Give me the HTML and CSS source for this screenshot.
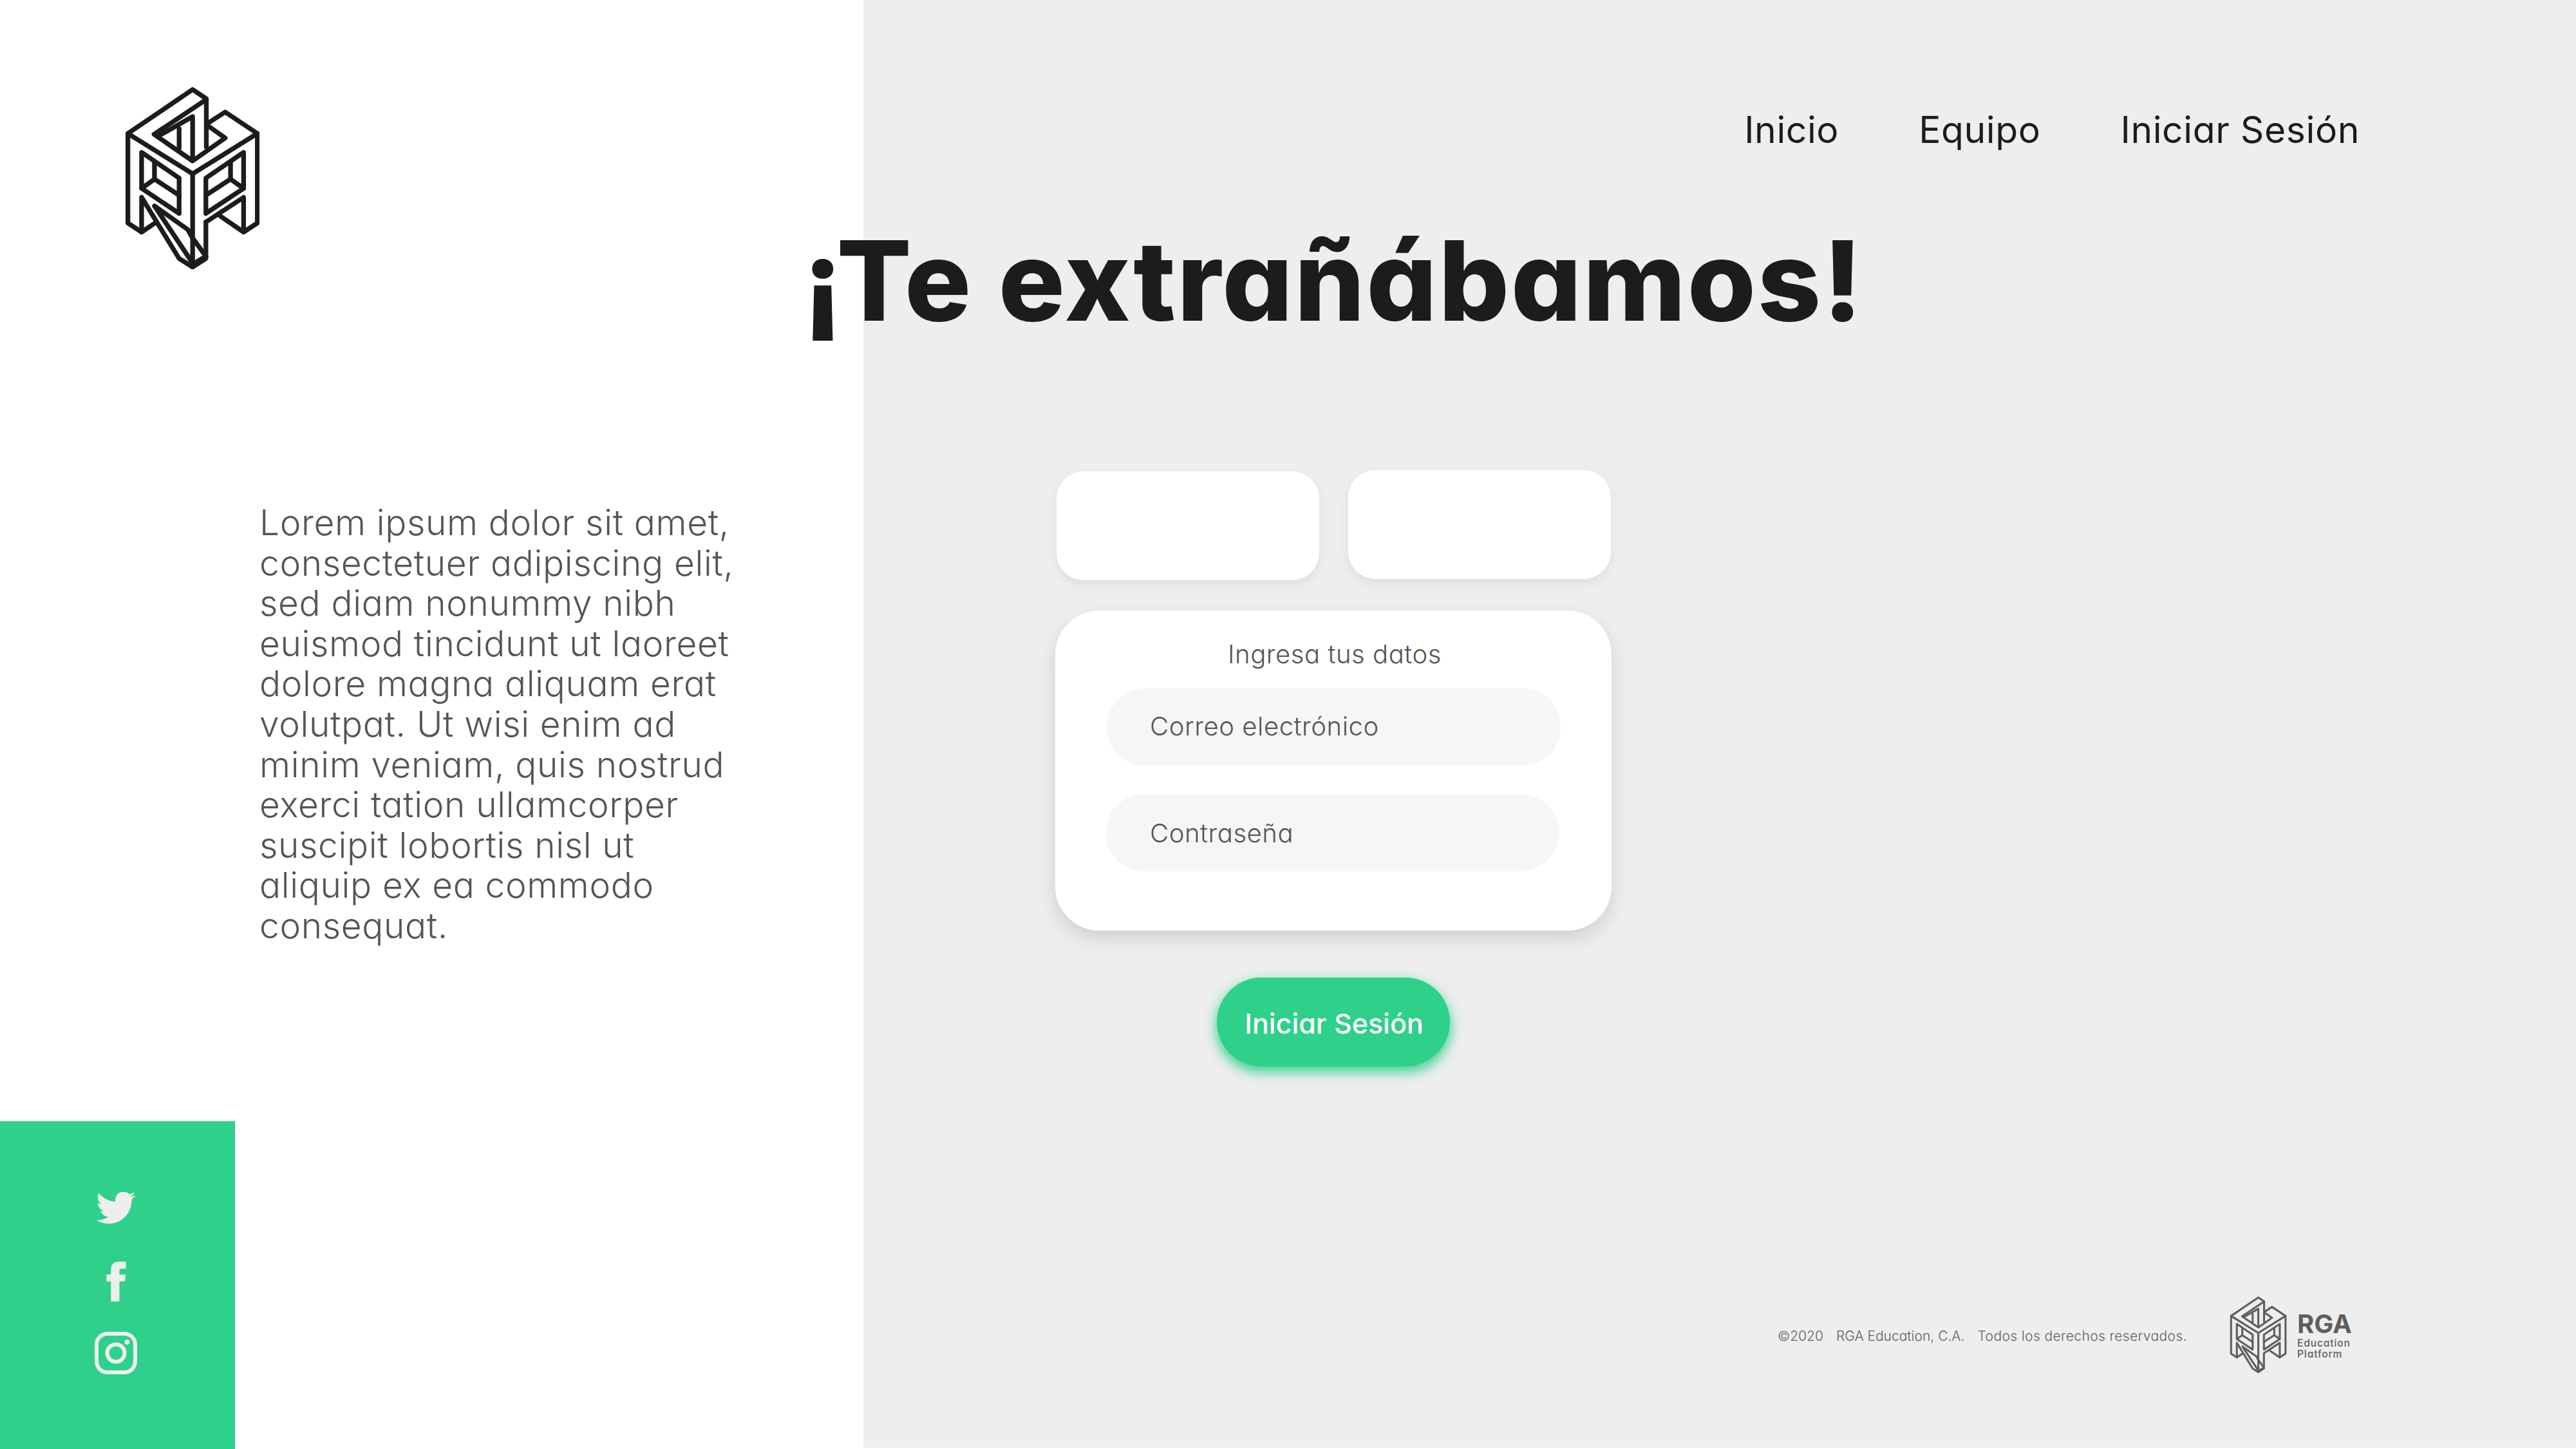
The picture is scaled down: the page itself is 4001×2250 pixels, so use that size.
FILE: index.html
```html
<!DOCTYPE html>
<html lang="es">
<head>
<meta charset="utf-8">
<title>RGA Education</title>
<link rel="stylesheet" href="styles.css">
</head>
<body>
<svg class="defs" width="0" height="0" aria-hidden="true">
  <symbol id="rga" viewBox="135 105 625 850">
    <g fill="none" stroke="currentColor" stroke-width="22" stroke-linejoin="round" stroke-linecap="round">
      <path d="M275 738 L210 782 L146 740 V322 L448 117 L512 160 V385"/>
      <path d="M525 270 L600 222 L750 322 V740 L686 782 L578 708"/>
      <path d="M146 322 L448 510 L750 322"/>
      <path d="M448 510 V945"/>
      <path d="M505 168 L268 326 L448 450 L600 343 L525 290"/>
      <path d="M295 330 L448 243 V445"/>
      <path d="M385 300 V392"/>
      <path d="M210 410 L385 530 V695 L210 578 Z"/>
      <path d="M270 455 V530 M210 578 L270 535 L385 610"/>
      <path d="M686 410 L510 530 V695 L686 578 Z"/>
      <path d="M625 455 V530 M686 578 L625 535 L510 610"/>
      <path d="M510 735 V905 L448 945 L385 905 L210 620 V782"/>
      <path d="M510 735 L686 620 V782"/>
      <path d="M270 660 L425 770 L448 810 M270 660 L440 915"/>
      <path d="M448 810 L510 895 L448 932"/>
    </g>
  </symbol>
</svg>
<main class="page">
  <aside class="side">
    <svg class="logo"><use href="#rga"/></svg>
    <p class="intro">Lorem ipsum dolor sit amet,<br>consectetuer adipiscing elit,<br>sed diam nonummy nibh<br>euismod tincidunt ut laoreet<br>dolore magna aliquam erat<br>volutpat. Ut wisi enim ad<br>minim veniam, quis nostrud<br>exerci tation ullamcorper<br>suscipit lobortis nisl ut<br>aliquip ex ea commodo<br>consequat.</p>
    <div class="social">
      <svg class="ico-tw" viewBox="0 2.500 24 20"><path d="M23.953 4.570a10 10 0 0 1-2.825.775 4.958 4.958 0 0 0 2.163-2.723c-.951.555-2.005.959-3.127 1.184a4.920 4.920 0 0 0-8.384 4.482C7.690 8.095 4.067 6.130 1.640 3.162a4.822 4.822 0 0 0-.666 2.475c0 1.710.870 3.213 2.188 4.096a4.904 4.904 0 0 1-2.228-.616v.060a4.923 4.923 0 0 0 3.946 4.827 4.996 4.996 0 0 1-2.212.085 4.936 4.936 0 0 0 4.604 3.417 9.867 9.867 0 0 1-6.102 2.105c-.390 0-.779-.023-1.170-.067a13.995 13.995 0 0 0 7.557 2.209c9.053 0 13.998-7.496 13.998-13.985 0-.210 0-.420-.015-.630A9.935 9.935 0 0 0 24 4.590z"/></svg>
      <svg class="ico-fb" viewBox="495 707 92 188"><path d="M516 895V800H495V768H516V745C516 720 530 707 555 707H587V740H565C558 740 556 743 556 750V768H585L582 800H556V895Z"/></svg>
      <svg class="ico-ig" viewBox="0 0 66 66"><rect x="3" y="3" width="60" height="60" rx="17" class="ig-line"/><circle cx="33" cy="33" r="13.500" class="ig-line"/><circle cx="50.500" cy="16" r="4"/></svg>
    </div>
  </aside>
  <section class="main">
    <nav class="nav">
      <a>Inicio</a>
      <a>Equipo</a>
      <a>Iniciar Sesión</a>
    </nav>
    <h1 class="title">¡Te extrañábamos!</h1>
    <div class="form">
      <div class="tabs">
        <div class="tab tab-a"></div>
        <div class="tab tab-b"></div>
      </div>
      <div class="card">
        <p class="card-title">Ingresa tus datos</p>
        <div class="field field-a">Correo electrónico</div>
        <div class="field field-b">Contraseña</div>
      </div>
      <button class="submit">Iniciar Sesión</button>
    </div>
    <footer class="foot">
      <span class="legal"><span>©2020</span><span>RGA Education, C.A.</span><span class="legal-rights">Todos los derechos reservados.</span></span>
      <svg class="foot-logo"><use href="#rga"/></svg>
      <div class="brand"><b>RGA</b><span>Education<br>Platform</span></div>
    </footer>
  </section>
</main>
</body>
</html>
```
FILE: styles.css
```css
* { box-sizing: border-box; }
html, body { margin: 0; padding: 0; }
body { font-family: Inter, "Liberation Sans", sans-serif; font-feature-settings: "cv11"; color: #1c1c1c; background: #fff; }
.defs { position: absolute; }
.page { display: flex; width: 4001px; height: 2250px; overflow: hidden; align-items: flex-start; }

.side { width: 1341px; height: 2250px; flex: none; display: flex; flex-direction: column; background: #fff; padding-top: 135px; }
.logo { width: 208px; height: 283px; margin-left: 195px; color: #1c1c1c; flex: none; }
.intro { margin: 362px 0 0 403px; font-size: 55px; line-height: 62.6px; font-weight: 280; color: #555; letter-spacing: 0.65px; white-space: nowrap; }
.social { margin-top: auto; width: 365px; height: 509px; background: #2ed08a; display: flex; flex-direction: column; align-items: center; padding: 110px 5px 0 0; color: #eee; fill: #eee; }
.ico-tw { width: 62px; height: 51px; }
.ico-fb { width: 31px; height: 62px; margin-top: 57px; }
.ico-ig { width: 66px; height: 66px; margin-top: 47px; }
.ig-line { fill: none; stroke: #eee; stroke-width: 6; }

.main { flex: 1; height: 2248px; background: #eee; display: flex; flex-direction: column; position: relative; }
.nav { display: flex; justify-content: flex-end; gap: 124px; padding: 160px 336px 0 0; font-size: 57px; line-height: 84px; font-weight: 420; color: #1c1c1c; letter-spacing: 0.6px; }
.title { margin: 91px 0 0 -94px; font-size: 172px; line-height: 200px; font-weight: 800; white-space: nowrap; color: #1c1c1c; letter-spacing: 2.500px; }

.form { margin: 195px 0 0 298px; width: 864px; display: flex; flex-direction: column; }
.tabs { display: flex; justify-content: space-between; align-items: flex-start; padding: 0 1px 0 2px; }
.tab { width: 408px; height: 169px; background: #fff; border-radius: 42px; box-shadow: 0 6px 16px rgba(0,0,0,.07); }
.tab-a { margin-top: 2px; }
.card { margin-top: 47px; height: 497px; background: #fff; border-radius: 68px; box-shadow: 0 12px 28px rgba(0,0,0,.13); padding-top: 38px; display: flex; flex-direction: column; font-weight: 280; color: #555; letter-spacing: 0.55px; }
.card-title { margin: 0; text-align: center; font-size: 40px; line-height: 60px; padding-left: 4px; }
.field { width: 705px; height: 120px; border-radius: 60px; background: #f6f6f6; display: flex; align-items: center; font-size: 40px; }
.field-a { margin: 23px 0 0 80px; padding: 0 0 4px 67px; }
.field-b { margin: 44px 0 0 78px; padding-left: 69px; }
.submit { align-self: center; margin-top: 73px; width: 362px; height: 138px; border: 0; border-radius: 69px; background: #2ed08a; color: #fff; font: 500 43px Inter, sans-serif; font-feature-settings: "cv11"; box-shadow: 0 8px 18px 2px rgba(46,208,138,.85); padding: 3px 0 0 2px; }

.foot { position: absolute; left: 1420px; right: 0; top: 2013px; display: flex; align-items: center; color: #5e5e5e; }
.legal { display: flex; gap: 20px; font-size: 21px; font-weight: 300; width: 702px; flex: none; white-space: nowrap; padding-top: 4px; }
.legal-rights { letter-spacing: 0.4px; }
.foot-logo { width: 89px; height: 119px; color: #5e5e5e; flex: none; }
.brand { margin-left: 16px; display: flex; flex-direction: column; font-weight: 500; font-size: 15.500px; line-height: 17px; letter-spacing: 0.9px; }
.brand b { font-size: 40px; line-height: 42px; font-weight: 700; letter-spacing: 0; }
```
